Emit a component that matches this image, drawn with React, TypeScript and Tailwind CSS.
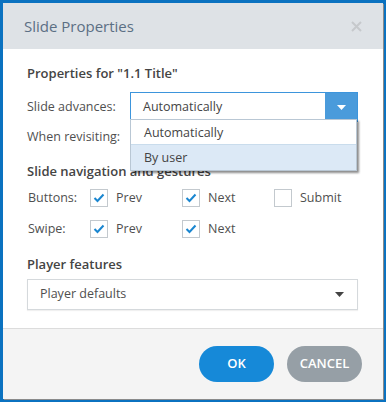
import React from "react";

const font = { fontFamily: '"Open Sans", "Noto Sans", sans-serif' };

const Check: React.FC<{ checked?: boolean; label: string }> = ({ checked, label }) => (
  <div className="flex items-center w-[92px] shrink-0">
    <div className="w-[18px] h-[18px] border border-[#c3c9ce] bg-white flex items-center justify-center">
      {checked && (
        <svg width="12" height="10" viewBox="0 0 12 10">
          <path d="M1.5 5 L4.5 8 L10.5 1.5" fill="none" stroke="#1a86d0" strokeWidth="2" />
        </svg>
      )}
    </div>
    <span className="ml-[8px]">{label}</span>
  </div>
);

export default function App() {
  return (
    <div className="w-[386px] h-[402px] bg-[#0b72c0] pt-[3px] pl-[3px] pr-[3px] pb-[3px] text-[12.5px] text-[#4f4f4f]" style={font}>
      <div className="relative w-[380px] h-[396px] bg-white flex flex-col shadow-[1px_1px_0_#8a8a8a]">
        {/* header */}
        <div className="h-[46px] bg-[#dee2e6] flex items-center justify-between pl-[21px] pr-[21px]">
          <span className="text-[15px] text-[#5b6f84]">Slide Properties</span>
          <svg width="11" height="11" viewBox="0 0 11 11">
            <path d="M1 1 L10 10 M10 1 L1 10" stroke="#c6c9cc" strokeWidth="2" />
          </svg>
        </div>

        {/* body */}
        <div className="flex-1 pl-[24px] pr-[25px] pt-[15px]">
          <div className="font-semibold text-[13px] text-[#444] h-[18px] leading-[18px]">Properties for "1.1 Title"</div>
          <div className="flex items-center mt-[10px] h-[30px]">
            <span className="w-[103px]">Slide advances:</span>
            <div className="flex-1 h-[30px] border border-[#3d95dc] flex">
              <span className="flex-1 pl-[12px] leading-[28px] text-[#444]">Automatically</span>
              <div className="w-[32px] bg-[#4a9bdb] flex items-center justify-center">
                <svg width="9" height="5" viewBox="0 0 9 5">
                  <path d="M0 0 H9 L4.5 5 Z" fill="#fff" />
                </svg>
              </div>
            </div>
          </div>
          <div className="flex items-center h-[30px]">
            <span>When revisiting:</span>
          </div>
          <div className="font-semibold text-[13px] text-[#444] mt-[10px] h-[18px] leading-[18px]">Slide navigation and gestures</div>
          <div className="flex items-center mt-[8px] h-[20px]">
            <span className="w-[63px] shrink-0 pl-[1px]">Buttons:</span>
            <Check checked label="Prev" />
            <Check checked label="Next" />
            <Check label="Submit" />
          </div>
          <div className="flex items-center mt-[11px] h-[20px]">
            <span className="w-[63px] shrink-0 pl-[1px]">Swipe:</span>
            <Check checked label="Prev" />
            <Check checked label="Next" />
          </div>
          <div className="font-semibold text-[13px] text-[#444] mt-[16px] h-[18px] leading-[18px]">Player features</div>
          <div className="mt-[6px] h-[31px] border border-[#d5d9dc] shadow-[0_1px_1px_rgba(0,0,0,0.06)] flex items-center justify-between pl-[12px] pr-[13px]">
            <span>Player defaults</span>
            <svg width="9" height="5" viewBox="0 0 9 5">
              <path d="M0 0 H9 L4.5 5 Z" fill="#444" />
            </svg>
          </div>
        </div>

        {/* footer */}
        <div className="h-[71px] bg-[#f4f4f4] border-t border-[#dcdcdc] flex items-center justify-end gap-[13px] pr-[21px]">
          <button className="w-[75px] h-[36px] rounded-full bg-[#1689d8] text-white text-[13px] font-semibold">OK</button>
          <button className="w-[75px] h-[36px] rounded-full bg-[#969fa6] text-white text-[13px] font-semibold">CANCEL</button>
        </div>

        {/* open dropdown list */}
        <div className="absolute left-[127px] top-[116px] w-[227px] bg-white border border-[#b9c7d4] shadow-[2px_2px_2px_rgba(0,0,0,0.45)]">
          <div className="h-[25px] leading-[25px] pl-[13px] text-[#444] border-b border-[#c9dcec]">Automatically</div>
          <div className="h-[25px] leading-[25px] pl-[13px] text-[#444] bg-[#dce9f6]">By user</div>
        </div>
      </div>
    </div>
  );
}
